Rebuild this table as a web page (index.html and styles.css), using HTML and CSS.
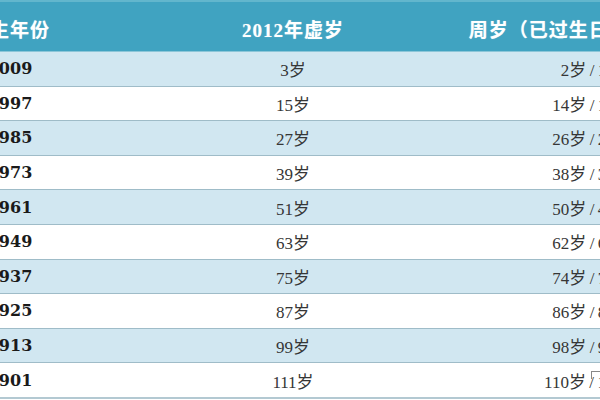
FILE: index.html
```html
<!DOCTYPE html>
<html lang="zh-CN">
<head>
<meta charset="utf-8">
<title>年龄对照表</title>
<link rel="stylesheet" href="styles.css">
</head>
<body>
<div class="table">
  <div class="row head">
    <div class="cell">出生年份</div>
    <div class="cell">2012年虚岁</div>
    <div class="cell">周岁（已过生日/未过生日）</div>
  </div>
  <div class="row odd"><div class="cell year">2009</div><div class="cell">3岁</div><div class="cell">2岁&thinsp;/&thinsp;1岁</div></div>
  <div class="row"><div class="cell year">1997</div><div class="cell">15岁</div><div class="cell">14岁&thinsp;/&thinsp;13岁</div></div>
  <div class="row odd"><div class="cell year">1985</div><div class="cell">27岁</div><div class="cell">26岁&thinsp;/&thinsp;25岁</div></div>
  <div class="row"><div class="cell year">1973</div><div class="cell">39岁</div><div class="cell">38岁&thinsp;/&thinsp;37岁</div></div>
  <div class="row odd"><div class="cell year">1961</div><div class="cell">51岁</div><div class="cell">50岁&thinsp;/&thinsp;49岁</div></div>
  <div class="row"><div class="cell year">1949</div><div class="cell">63岁</div><div class="cell">62岁&thinsp;/&thinsp;61岁</div></div>
  <div class="row odd"><div class="cell year">1937</div><div class="cell">75岁</div><div class="cell">74岁&thinsp;/&thinsp;73岁</div></div>
  <div class="row"><div class="cell year">1925</div><div class="cell">87岁</div><div class="cell">86岁&thinsp;/&thinsp;85岁</div></div>
  <div class="row odd"><div class="cell year">1913</div><div class="cell">99岁</div><div class="cell">98岁&thinsp;/&thinsp;97岁</div></div>
  <div class="row last"><div class="cell year">1901</div><div class="cell">111岁</div><div class="cell">110岁&thinsp;/&thinsp;109岁</div></div>
  <span class="mark"></span>
</div>
</body>
</html>
```
FILE: styles.css
```css
html, body {
  margin: 0;
  padding: 0;
  background: #ffffff;
  overflow: hidden;
  width: 600px;
  height: 400px;
}
.table {
  position: relative;
  margin-left: -70px;
  width: 758px;
  display: flex;
  flex-direction: column;
  font-family: "Liberation Serif", "Noto Sans CJK SC", serif;
}
.row {
  display: grid;
  grid-template-columns: 160px 406px 192px;
  height: 33.6px;
  border-bottom: 1px solid #9fbcc8;
  background: #ffffff;
  color: #363636;
  font-size: 17px;
}
.row.odd {
  background: #d1e7f1;
}
.row.last {
  border-bottom: 2px solid #b3c9d2;
}
.cell {
  display: flex;
  align-items: center;
  justify-content: center;
  white-space: nowrap;
}
.year {
  font-family: "DejaVu Serif", "Liberation Serif", serif;
  font-weight: bold;
  font-size: 16px;
  color: #1a1a1a;
}
.row.head {
  height: 49px;
  background: #40a3c1;
  border-top: 2px solid #62b6cd;
  border-bottom: 1px solid #8cc6d8;
  color: #ffffff;
  font-weight: bold;
  font-size: 19px;
  letter-spacing: 1px;
  text-shadow: 0 0 1px rgba(255,255,255,0.5);
}
.row.head .cell {
  padding-top: 4px;
}
.mark {
  position: absolute;
  left: 661px;
  top: 371px;
  width: 8px;
  height: 7px;
  border-top: 1px solid #888;
  border-left: 1px solid #888;
}
```
